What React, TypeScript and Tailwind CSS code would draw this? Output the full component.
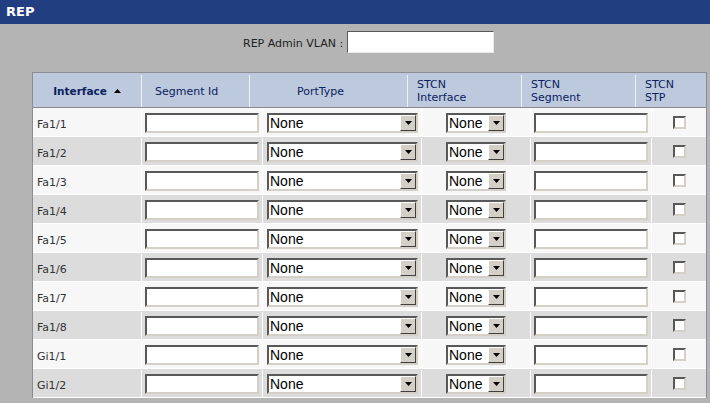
import React from "react";

const rows = ["Fa1/1", "Fa1/2", "Fa1/3", "Fa1/4", "Fa1/5", "Fa1/6", "Fa1/7", "Fa1/8", "Gi1/1", "Gi1/2"];

function TextBox({ w }: { w: string }) {
  return (
    <input
      type="text"
      className={`${w} h-[20px] bg-white border-2 border-t-[#585858] border-l-[#585858] border-b-[#d4d0c8] border-r-[#d4d0c8] outline-none`}
    />
  );
}

function Arrow() {
  return (
    <div className="w-[16px] h-[16px] bg-[#d4d0c8] border border-t-white border-l-white border-b-[#404040] border-r-[#404040] flex items-center justify-center">
      <svg width="7" height="4" viewBox="0 0 7 4">
        <path d="M0 0 H7 L3.5 4 Z" fill="#000" />
      </svg>
    </div>
  );
}

function Select({ w }: { w: string }) {
  return (
    <div
      className={`${w} h-[20px] bg-white border-2 border-t-[#585858] border-l-[#585858] border-b-[#d4d0c8] border-r-[#d4d0c8] flex items-center justify-between`}
    >
      <span className="pl-[1px] text-[14px] leading-none text-black" style={{ fontFamily: '"Liberation Sans", Arial, sans-serif' }}>
        None
      </span>
      <Arrow />
    </div>
  );
}

export default function App() {
  const dv = { fontFamily: '"DejaVu Sans", Verdana, sans-serif' };
  return (
    <div className="w-[710px] h-[403px] bg-[#b4b4b4] overflow-hidden" style={dv}>
      <div className="h-[24px] bg-[#213f80] flex items-center pl-[6px]">
        <span className="text-white font-bold text-[13px]">REP</span>
      </div>
      <div className="h-[48px] flex items-start pt-[7px] pl-[243px]">
        <span className="text-[11px] text-[#222] mt-[5px] mr-[4px]">REP Admin VLAN :</span>
        <input
          type="text"
          className="w-[147px] h-[22px] bg-white border border-t-[#585858] border-l-[#585858] border-b-[#e8e8e8] border-r-[#e8e8e8] outline-none"
        />
      </div>
      <div className="ml-[32px] w-[675px] border border-[#8c8c96] border-b-0 bg-[#c4c4c4]">
        <div className="flex h-[35px] pt-[2px] bg-[#bdc9dc] border-b border-[#8a8a8a] text-[#0b2161] text-[11px] leading-[13px]">
          <div className="w-[109px] border-r border-[#eef2f8] flex items-center justify-center font-bold text-[10.5px]">
            Interface
            <svg width="7" height="4" viewBox="0 0 7 4" className="ml-[7px]">
              <path d="M0 4 H7 L3.5 0 Z" fill="#000" />
            </svg>
          </div>
          <div className="w-[108px] border-r border-[#eef2f8] flex items-center pl-[13px]">Segment Id</div>
          <div className="w-[158px] border-r border-[#eef2f8] flex items-center pl-[47px]">PortType</div>
          <div className="w-[114px] border-r border-[#eef2f8] flex flex-col justify-center pl-[9px]">
            <span>STCN</span>
            <span>Interface</span>
          </div>
          <div className="w-[114px] border-r border-[#eef2f8] flex flex-col justify-center pl-[9px]">
            <span>STCN</span>
            <span>Segment</span>
          </div>
          <div className="w-[70px] flex flex-col justify-center pl-[9px]">
            <span>STCN</span>
            <span>STP</span>
          </div>
        </div>
        {rows.map((r, i) => (
          <div
            key={r}
            className={`flex h-[29px] pt-[1px] border-b border-white ${i % 2 === 0 ? "bg-[#f7f7f7]" : "bg-[#dcdcdc]"}`}
          >
            <div className="w-[109px] border-r border-white flex items-center pl-[4px] pt-[5px] text-[11px] text-[#333]">
              {r}
            </div>
            <div className="w-[121px] border-r border-white flex items-center pl-[3px]">
              <TextBox w="w-[114px]" />
            </div>
            <div className="w-[159px] border-r border-white flex items-center pl-[4px]">
              <Select w="w-[151px]" />
            </div>
            <div className="w-[109px] border-r border-white flex items-center justify-center">
              <Select w="w-[60px]" />
            </div>
            <div className="w-[121px] border-r border-white flex items-center pl-[3px]">
              <TextBox w="w-[114px]" />
            </div>
            <div className="w-[54px] flex items-center justify-center">
              <div className="w-[13px] h-[13px] bg-white border-2 border-t-[#585858] border-l-[#585858] border-b-[#d4d0c8] border-r-[#d4d0c8]" />
            </div>
          </div>
        ))}
      </div>
    </div>
  );
}
